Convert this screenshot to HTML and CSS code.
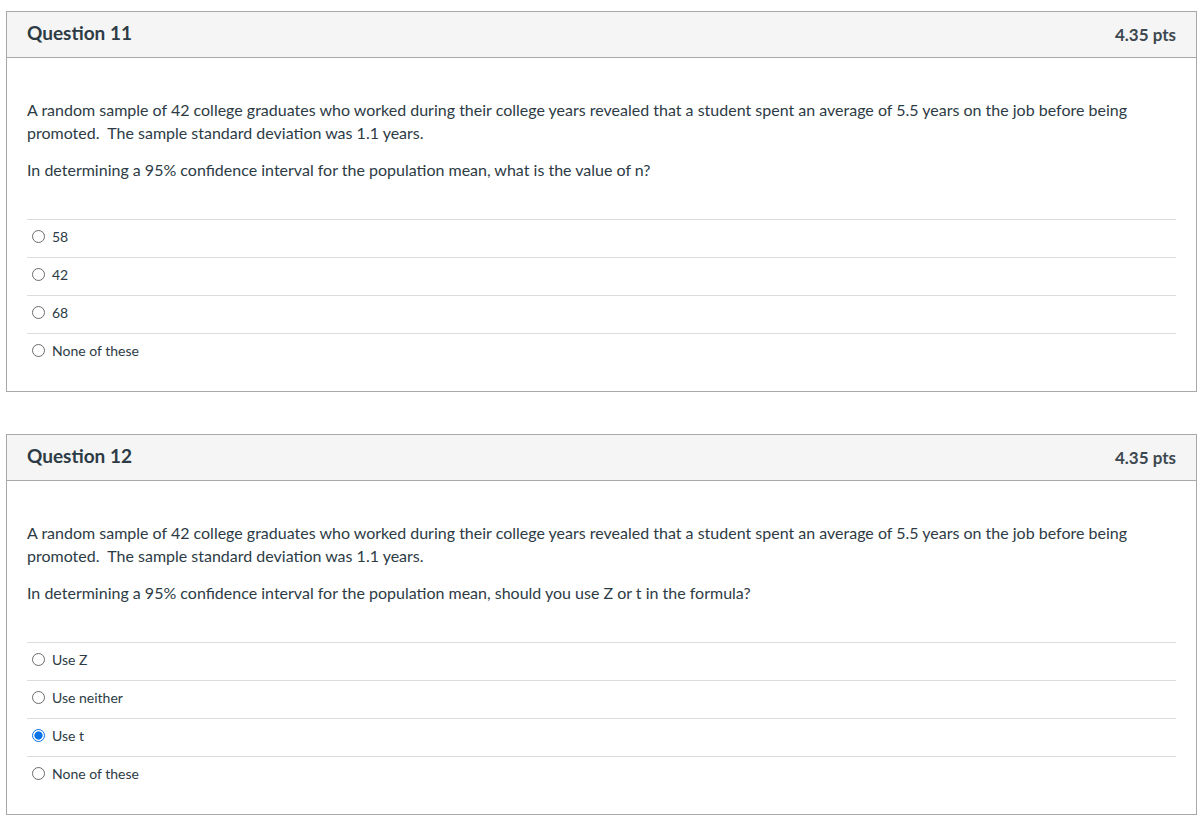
FILE: index.html
```html
<!DOCTYPE html>
<html>
<head>
<meta charset="utf-8">
<link rel="stylesheet" href="styles.css">
</head>
<body>
<div class="page">
  <div class="question">
    <div class="q-header">
      <span class="q-title">Question 11</span>
      <span class="q-pts">4.35 pts</span>
    </div>
    <div class="q-body">
      <div class="q-text">
        <p>A random sample of 42 college graduates who worked during their college years revealed that a student spent an average of 5.5 years on the job before being promoted.&nbsp; The sample standard deviation was 1.1 years.</p>
        <p>In determining a 95% confidence interval for the population mean, what is the value of n?</p>
      </div>
      <div class="answers">
        <div class="answer"><span class="radio"></span><span class="label">58</span></div>
        <div class="answer"><span class="radio"></span><span class="label">42</span></div>
        <div class="answer"><span class="radio"></span><span class="label">68</span></div>
        <div class="answer"><span class="radio"></span><span class="label">None of these</span></div>
      </div>
    </div>
  </div>

  <div class="question">
    <div class="q-header">
      <span class="q-title">Question 12</span>
      <span class="q-pts">4.35 pts</span>
    </div>
    <div class="q-body">
      <div class="q-text">
        <p>A random sample of 42 college graduates who worked during their college years revealed that a student spent an average of 5.5 years on the job before being promoted.&nbsp; The sample standard deviation was 1.1 years.</p>
        <p>In determining a 95% confidence interval for the population mean, should you use Z or t in the formula?</p>
      </div>
      <div class="answers">
        <div class="answer"><span class="radio"></span><span class="label">Use Z</span></div>
        <div class="answer"><span class="radio"></span><span class="label">Use neither</span></div>
        <div class="answer"><span class="radio checked"></span><span class="label">Use t</span></div>
        <div class="answer"><span class="radio"></span><span class="label">None of these</span></div>
      </div>
    </div>
  </div>
</div>
</body>
</html>
```

FILE: styles.css
```css
html, body {
  margin: 0;
  padding: 0;
  background: #ffffff;
}
body {
  font-family: Lato, "Liberation Sans", sans-serif;
  color: #2d3b45;
}
.page {
  padding: 11px 7px 0 6px;
  display: flex;
  flex-direction: column;
  gap: 42px;
}
.question {
  border: 1px solid #a8a8a8;
}
.q-header {
  height: 45px;
  background: #f5f5f5;
  border-bottom: 1px solid #a8a8a8;
  display: flex;
  align-items: center;
  justify-content: space-between;
  padding: 0 20px;
}
.q-title {
  font-size: 19px;
  font-weight: 700;
  color: #2d3b45;
  margin-top: -4px;
}
.q-pts {
  font-size: 17px;
  font-weight: 700;
  color: #3d4850;
  margin-top: 0;
}
.q-body {
  padding: 40px 20px 20px 20px;
}
.q-text p {
  margin: 0 0 14px 0;
  font-size: 16px;
  line-height: 23px;
}
.q-text p:last-child {
  margin-bottom: 0;
}
.answers {
  margin-top: 38px;
}
.answer {
  height: 37px;
  box-sizing: content-box;
  border-top: 1px solid #dcdcdc;
  display: flex;
  align-items: center;
  padding-left: 5px;
  font-size: 14px;
}
.answer > * {
  margin-top: -4px;
}
.radio {
  width: 13px;
  height: 13px;
  border: 1px solid #6b6b6b;
  border-radius: 50%;
  box-sizing: border-box;
  margin-right: 7px;
  background: #fff;
}
.radio.checked {
  border: 1px solid #0b73e8;
  background: radial-gradient(circle, #0b73e8 0 3.8px, #ffffff 4.4px);
}
.label {
  color: #2d3b45;
}
```
